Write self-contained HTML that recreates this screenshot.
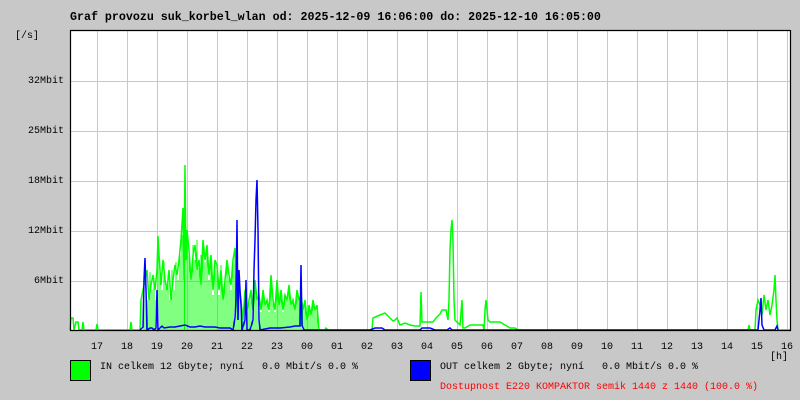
<!DOCTYPE html>
<html><head><meta charset="utf-8"><style>
html,body{margin:0;padding:0}
body{width:800px;height:400px;background:#c8c8c8;position:relative;overflow:hidden;font-family:"Liberation Mono","DejaVu Sans Mono",monospace;font-size:10px;color:#000}
.t{position:absolute;white-space:pre;line-height:12px}
</style></head><body>
<div class="t" style="left:70px;top:12px;font-weight:bold;font-size:11.65px">Graf provozu suk_korbel_wlan od: 2025-12-09 16:06:00 do: 2025-12-10 16:05:00</div>
<div class="t" style="left:15px;top:31px">[/s]</div>
<div class="t" style="right:736px;top:76px">32Mbit</div>
<div class="t" style="right:736px;top:126px">25Mbit</div>
<div class="t" style="right:736px;top:176px">18Mbit</div>
<div class="t" style="right:736px;top:226px">12Mbit</div>
<div class="t" style="right:736px;top:276px">6Mbit</div>
<svg style="position:absolute;left:0;top:0" width="800" height="400">
<rect x="70" y="30" width="720" height="300" fill="#fff"/>
<g stroke="#c8c8c8" stroke-width="1">
<path d="M97.5 30V330M127.5 30V330M157.5 30V330M187.5 30V330M217.5 30V330M247.5 30V330M277.5 30V330M307.5 30V330M337.5 30V330M367.5 30V330M397.5 30V330M427.5 30V330M457.5 30V330M487.5 30V330M517.5 30V330M547.5 30V330M577.5 30V330M607.5 30V330M637.5 30V330M667.5 30V330M697.5 30V330M727.5 30V330M757.5 30V330M787.5 30V330"/>
<path d="M70 81.5H790M70 131.5H790M70 181.5H790M70 231.5H790M70 281.5H790"/>
</g>
<g fill="none" stroke="#00ff00" stroke-width="1">
<path d="M144 330V295M146 330V282M148 330V300M150 330V272M152 330V290M154 330V278M156 330V300M158 330V236M160 330V265M162 330V290M164 330V262M166 330V285M168 330V275M170 330V300M172 330V270M174 330V290M176 330V262M178 330V280M180 330V255M182 330V235M184 330V208M185 330V165M187 330V230M189 330V250M191 330V275M193 330V245M195 330V260M197 330V240M199 330V268M201 330V255M203 330V240M205 330V262M207 330V250M209 330V280M211 330V258M213 330V295M215 330V262M217 330V270M219 330V295M221 330V265M223 330V300M225 330V282M227 330V262M229 330V278M231 330V290M233 330V260M235 330V248M237 330V280M239 330V290M241 330V305M243 330V318M245 330V290M247 330V312M249 330V300M251 330V292M253 330V310M255 330V280M257 330V300M259 330V295M261 330V312M263 330V290M265 330V305M267 330V300M269 330V312M271 330V275M273 330V300M275 330V312M277 330V282M279 330V305M281 330V292M283 330V312M285 330V296M287 330V300M289 330V285M291 330V305M293 330V300M295 330V310M297 330V290M299 330V300M301 330V295M303 330V310M305 330V300M307 330V318M309 330V305M311 330V315M313 330V300M315 330V310M317 330V305"/>
</g>
<g fill="none" stroke="#00ff00" stroke-width="1.5">
<polyline points="70,330 71,318 73,318 74,330 76,322 78,322 79,330 82,330 83,322 84,330 96,330 97,324 98,330 130,330 131,322 132,330 140,330 141,300 143,290 145,280 147,270 149,300 151,285 153,275 155,290 157,270 158,236 159,255 161,285 163,260 165,280 167,290 169,270 171,300 173,280 175,265 177,275 179,260 181,240 183,208 184,280 185,165 186,260 187,230 189,250 191,280 193,255 195,245 197,270 199,260 201,285 203,240 205,260 207,245 209,275 211,255 213,290 215,260 217,265 219,290 221,270 223,300 225,280 227,260 229,275 231,285 233,260 235,248 237,275 239,285 241,300 243,320 245,290 247,310 249,300 251,290 253,310 255,280 257,300 259,295 261,310 263,290 265,305 267,300 269,310 271,275 273,300 275,310 277,280 279,305 281,290 283,310 285,295 287,300 289,285 291,305 293,300 295,310 297,290 299,300 301,295 303,310 305,300 307,320 309,305 311,315 313,300 315,310 317,305 319,330 325,330 326,328 328,330 372,330 373,318 380,315 385,313 390,318 393,321 395,320 397,318 400,325 405,323 410,325 415,326 420,326 421,292 422,322 427,322 433,322 436,318 440,314 442,310 446,310 448,320 449,300 450,250 451,230 452,220 453,240 454,300 455,320 460,325 462,300 463,328 465,328 470,325 476,325 483,325 484,330 485,310 486,300 487,310 488,320 490,322 495,322 500,322 505,325 510,328 515,328 518,330 748,330 749,325 750,330 755,330 756,310 758,300 760,305 762,315 764,295 766,310 768,300 770,315 772,305 774,290 775,275 776,300 777,320 778,330 790,330"/>
</g>
<g fill="none" stroke="#0000ff" stroke-width="1.5">
<polyline points="140,330 143,327 144,280 145,258 146,290 147,330 150,328 152,328 154,330 156,328 157,290 158,330 160,328 162,326 164,328 170,327 175,327 180,326 185,325 190,327 195,327 200,326 205,327 210,327 215,327 220,328 225,328 230,328 233,330 235,318 236,300 237,220 238,320 239,270 240,290 241,305 242,330 245,320 246,280 247,330 250,330 253,320 254,270 255,240 256,200 257,180 258,230 259,320 260,330 270,328 280,328 290,327 295,326 300,326 301,265 302,325 304,330 370,330 375,328 382,328 385,330 420,330 422,328 430,328 435,330 447,330 450,328 452,330 758,330 760,310 761,298 762,325 764,330 775,330 777,326 778,330"/>
</g>
<path d="M70.5 30V330.5H790.5V30M70 30.5H790" stroke="#000" stroke-width="1.2" fill="none"/>
<rect x="70.5" y="360.5" width="20" height="20" fill="#00ff00" stroke="#000"/>
<rect x="410.5" y="360.5" width="20" height="20" fill="#0000ff" stroke="#000"/>
</svg>
<div class="t" style="left:91px;top:342px">17</div>
<div class="t" style="left:121px;top:342px">18</div>
<div class="t" style="left:151px;top:342px">19</div>
<div class="t" style="left:181px;top:342px">20</div>
<div class="t" style="left:211px;top:342px">21</div>
<div class="t" style="left:241px;top:342px">22</div>
<div class="t" style="left:271px;top:342px">23</div>
<div class="t" style="left:301px;top:342px">00</div>
<div class="t" style="left:331px;top:342px">01</div>
<div class="t" style="left:361px;top:342px">02</div>
<div class="t" style="left:391px;top:342px">03</div>
<div class="t" style="left:421px;top:342px">04</div>
<div class="t" style="left:451px;top:342px">05</div>
<div class="t" style="left:481px;top:342px">06</div>
<div class="t" style="left:511px;top:342px">07</div>
<div class="t" style="left:541px;top:342px">08</div>
<div class="t" style="left:571px;top:342px">09</div>
<div class="t" style="left:601px;top:342px">10</div>
<div class="t" style="left:631px;top:342px">11</div>
<div class="t" style="left:661px;top:342px">12</div>
<div class="t" style="left:691px;top:342px">13</div>
<div class="t" style="left:721px;top:342px">14</div>
<div class="t" style="left:751px;top:342px">15</div>
<div class="t" style="left:781px;top:342px">16</div>
<div class="t" style="left:770px;top:352px">[h]</div>
<div class="t" style="left:100px;top:362px">IN celkem 12 Gbyte; nyní   0.0 Mbit/s 0.0 %</div>
<div class="t" style="left:440px;top:362px">OUT celkem 2 Gbyte; nyní   0.0 Mbit/s 0.0 %</div>
<div class="t" style="left:440px;top:382px;color:#ff0000">Dostupnost E220 KOMPAKTOR semik 1440 z 1440 (100.0 %)</div>
</body></html>
